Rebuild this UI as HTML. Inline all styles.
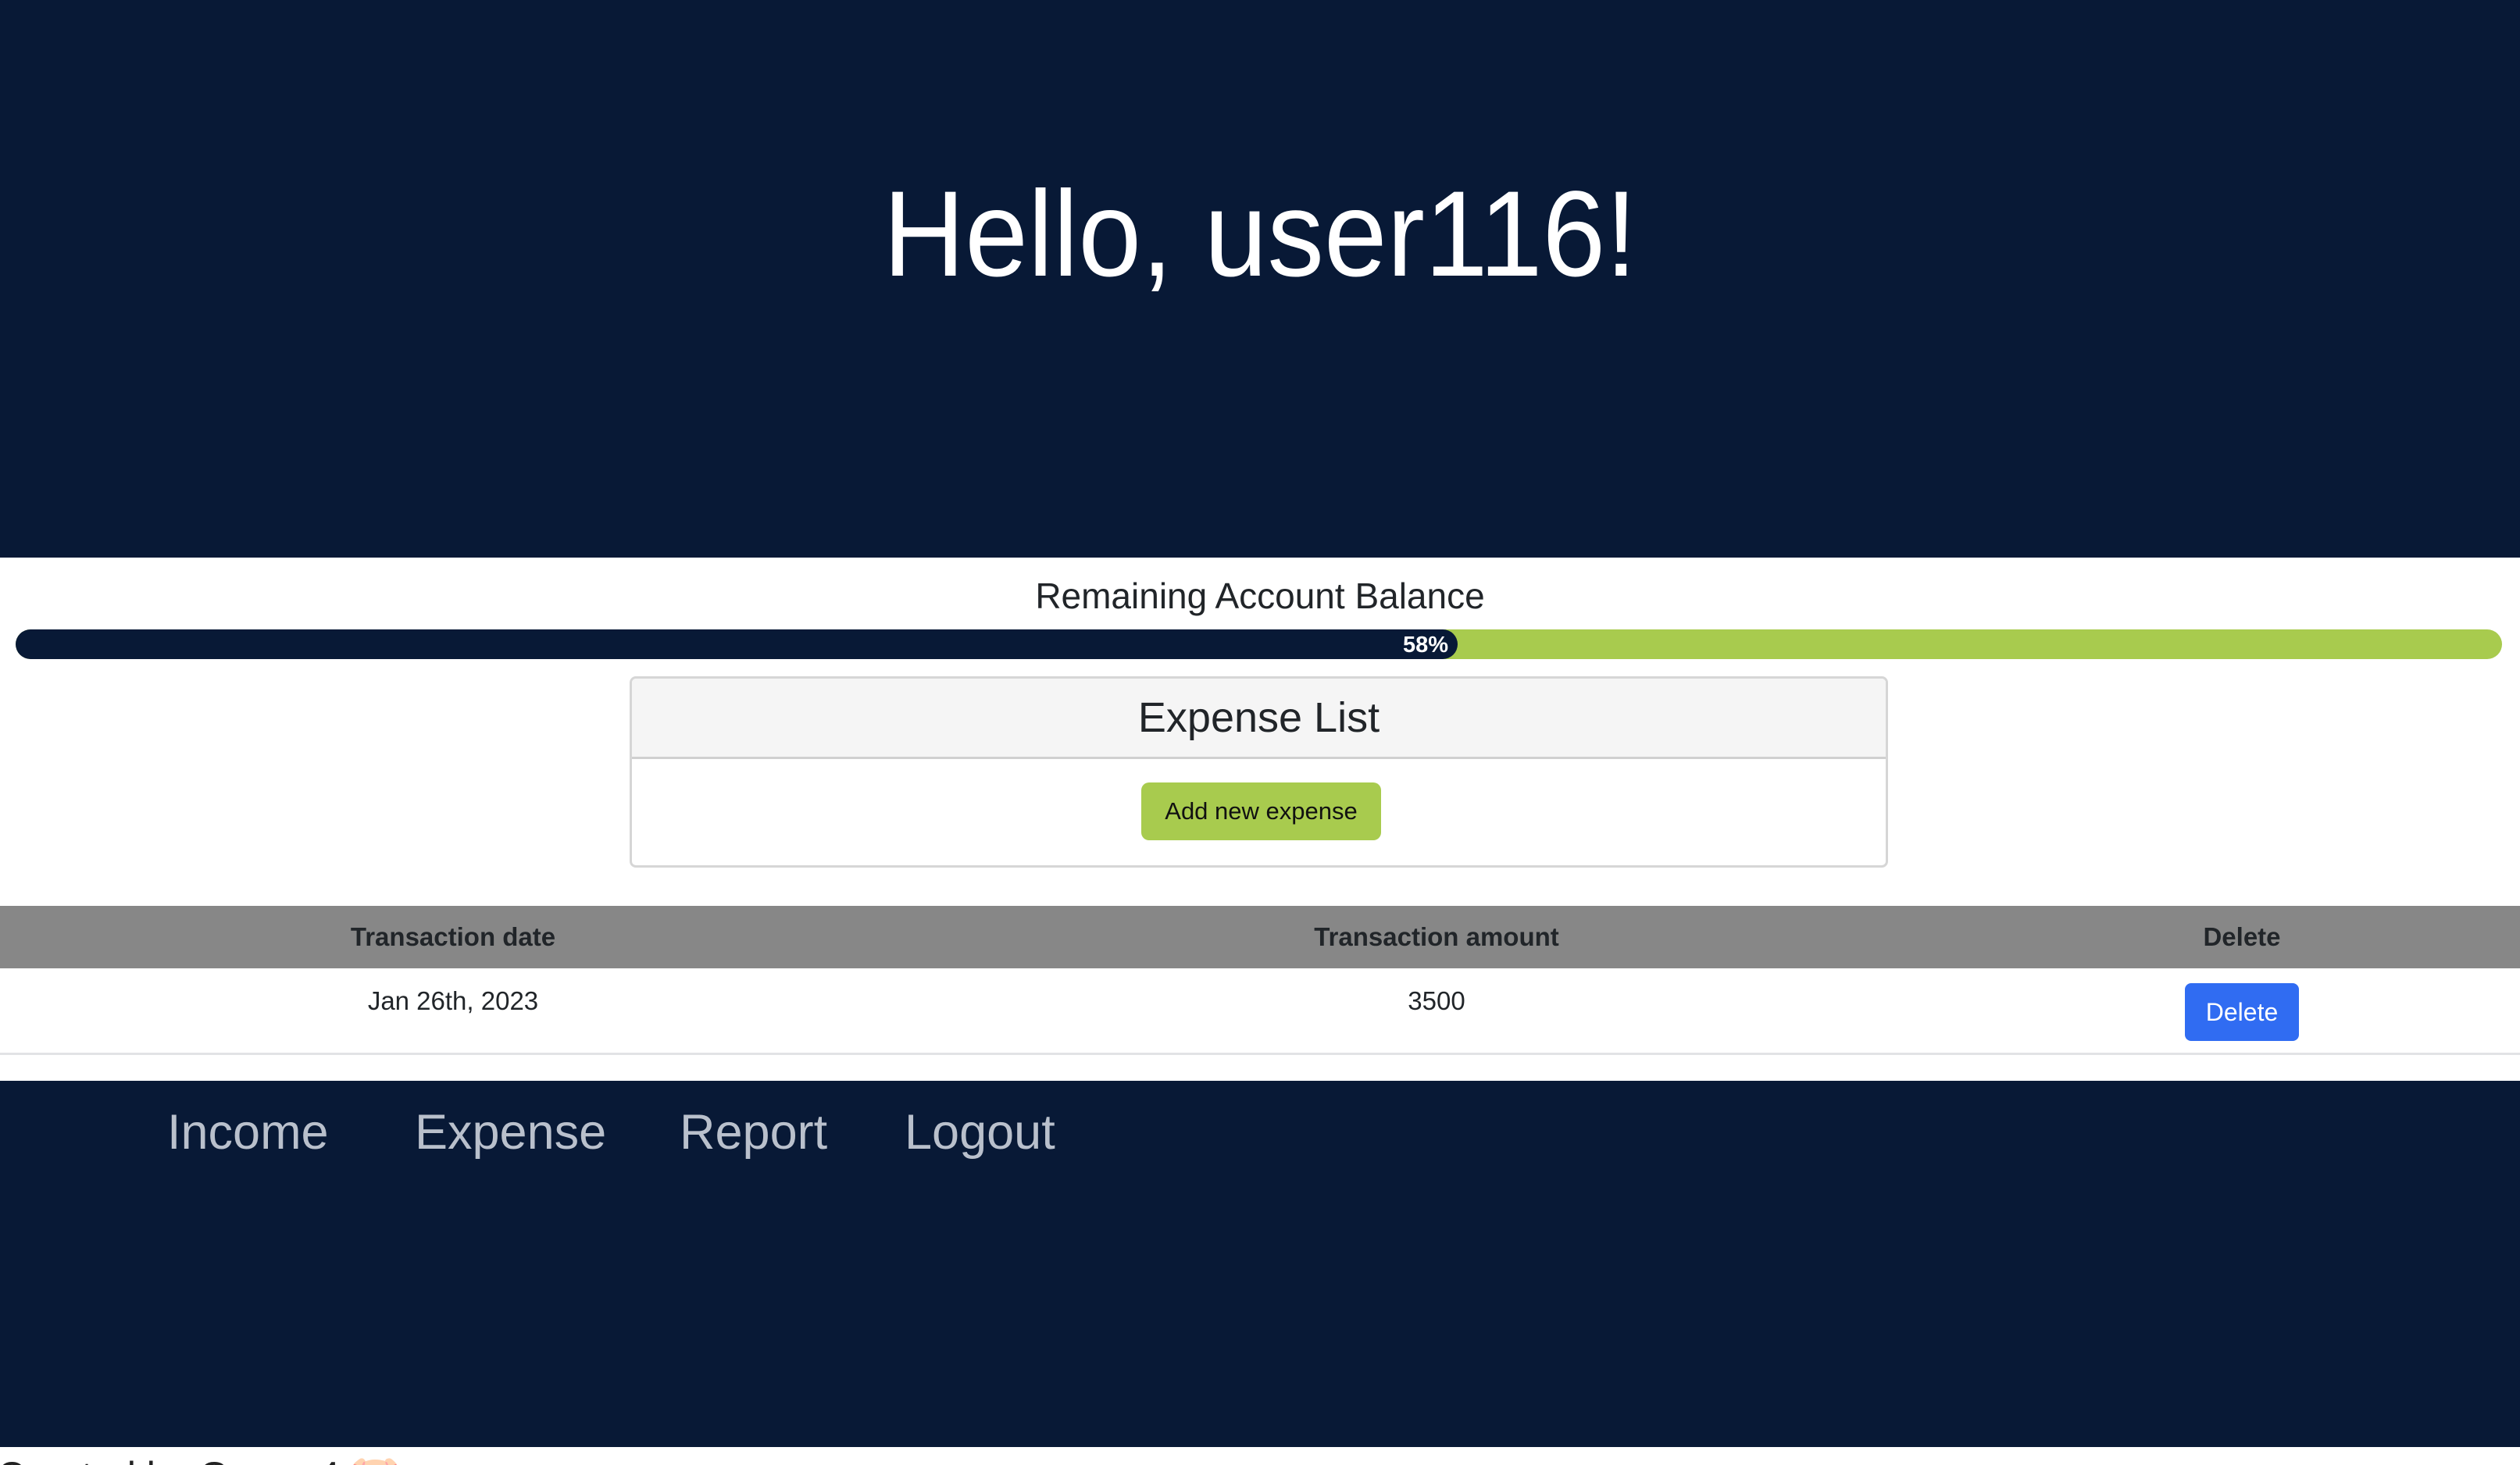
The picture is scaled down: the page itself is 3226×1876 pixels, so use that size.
<!DOCTYPE html>
<html><head><meta charset="utf-8"><style>
*{margin:0;padding:0;box-sizing:border-box}
html,body{width:3226px;height:1876px;overflow:hidden}
body{background:#fff;font-family:"Liberation Sans",sans-serif;position:relative;color:#212529}
.abs{position:absolute}
.hdr{left:0;top:0;width:3226px;height:714px;background:#081936}
.title{left:0;width:3226px;top:215px;text-align:center;color:#fff;font-size:156px;line-height:170px;transform:scaleX(0.93);transform-origin:1613px 0}
.rab{left:0;width:3226px;top:734px;text-align:center;font-size:46px;line-height:58px}
.bar{left:20px;top:806px;width:3183px;height:38px;border-radius:19px;background:#a8cb4e;overflow:hidden}
.fill{left:0;top:0;width:1846px;height:38px;background:#081936;border-radius:0 19px 19px 0;color:#fff;font-weight:bold;font-size:29px;line-height:40px;text-align:right;padding-right:12px}
.card{left:806px;top:866px;width:1611px;height:245px;border:3px solid #d6d6d6;border-radius:8px;overflow:hidden}
.ch{left:0;top:0;width:100%;height:103px;background:#f5f5f5;border-bottom:3px solid #d0d0d0;text-align:center;font-size:54px;line-height:100px}
.btn{left:652px;top:133px;width:307px;height:74px;background:#a8cb4e;border-radius:10px;text-align:center;font-size:31px;line-height:74px;color:#111}
.th{left:0;top:1160px;width:3226px;height:80px;background:#878787}
.tr{left:0;top:1240px;width:3226px;height:111px;border-bottom:3px solid #e2e3e5}
.c{font-size:33px;text-align:center;width:600px;margin-left:-300px}
.del{left:2797px;top:1259px;width:146px;height:74px;background:#306cf2;border-radius:8px;color:#fff;font-size:32px;line-height:74px;text-align:center}
.ftr{left:0;top:1384px;width:3226px;height:469px;background:#081936}
.nav{top:1405px;color:#b9c0cc;font-size:63px;line-height:90px;font-weight:300}
.cr{left:-4px;top:1860px;font-size:50px;line-height:60px;color:#222;font-weight:300;white-space:nowrap}
</style></head><body>
<div class="abs hdr"></div>
<div class="abs title">Hello, user116!</div>
<div class="abs rab">Remaining Account Balance</div>
<div class="abs bar"><div class="abs fill">58%</div></div>
<div class="abs card"><div class="abs ch">Expense List</div><div class="abs btn">Add new expense</div></div>
<div class="abs th"></div>
<div class="abs c" style="left:580px;top:1180px;font-weight:bold;line-height:40px">Transaction date</div>
<div class="abs c" style="left:1839px;top:1180px;font-weight:bold;line-height:40px">Transaction amount</div>
<div class="abs c" style="left:2870px;top:1180px;font-weight:bold;line-height:40px">Delete</div>
<div class="abs tr"></div>
<div class="abs c" style="left:580px;top:1262px;line-height:40px">Jan 26th, 2023</div>
<div class="abs c" style="left:1839px;top:1262px;line-height:40px">3500</div>
<div class="abs del">Delete</div>
<div class="abs ftr"></div>
<div class="abs nav" style="left:214px">Income</div>
<div class="abs nav" style="left:531px">Expense</div>
<div class="abs nav" style="left:870px">Report</div>
<div class="abs nav" style="left:1158px">Logout</div>
<div class="abs cr">Created by Group 4 🐷</div>
</body></html>
